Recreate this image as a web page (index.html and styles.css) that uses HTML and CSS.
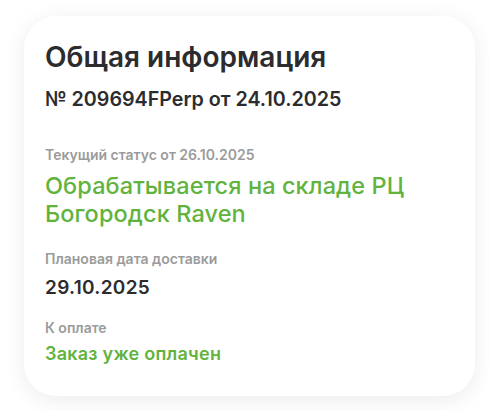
FILE: index.html
```html
<!DOCTYPE html>
<html lang="ru">
<head>
<meta charset="utf-8">
<link rel="stylesheet" href="styles.css">
</head>
<body>
<section class="card">
  <h1 class="title">Общая информация</h1>
  <div class="number">№ 209694FPerp от 24.10.2025</div>
  <div class="label label-first">Текущий статус от 26.10.2025</div>
  <div class="status">Обрабатывается на складе РЦ<br>Богородск Raven</div>
  <div class="label label-gap">Плановая дата доставки</div>
  <div class="date">29.10.2025</div>
  <div class="label label-gap2">К оплате</div>
  <div class="paid">Заказ уже оплачен</div>
</section>
</body>
</html>
```
FILE: styles.css
```css
html, body {
  margin: 0;
  background: #ffffff;
}
body {
  padding: 16px 15px 15px 24px;
  font-family: "Inter", "Noto Sans", sans-serif;
}
.card {
  width: 451px;
  height: 380px;
  box-sizing: border-box;
  background: #ffffff;
  border-radius: 32px;
  box-shadow: 0 4px 22px rgba(0, 0, 0, 0.08);
  padding: 24px 21px 0 21px;
}
.title {
  margin: 0;
  font-size: 28px;
  line-height: 34px;
  font-weight: 600;
  color: #2c2c2e;
}
.number {
  margin-top: 13px;
  font-size: 19.7px;
  line-height: 24px;
  font-weight: 600;
  color: #2c2c2e;
}
.label {
  font-size: 14px;
  line-height: 17px;
  font-weight: 600;
  color: #9b9b9b;
}
.label-first { margin-top: 35px; }
.label-gap { margin-top: 22px; }
.label-gap2 { margin-top: 20px; }
.status {
  margin-top: 9px;
  font-size: 23.5px;
  line-height: 28px;
  font-weight: 500;
  letter-spacing: 0.1px;
  color: #62b33e;
}
.date {
  margin-top: 9px;
  font-size: 19px;
  line-height: 23px;
  font-weight: 600;
  letter-spacing: 0.3px;
  color: #2c2c2e;
}
.paid {
  margin-top: 7px;
  font-size: 18px;
  line-height: 22px;
  font-weight: 600;
  letter-spacing: 0.25px;
  color: #62b33e;
}
```
